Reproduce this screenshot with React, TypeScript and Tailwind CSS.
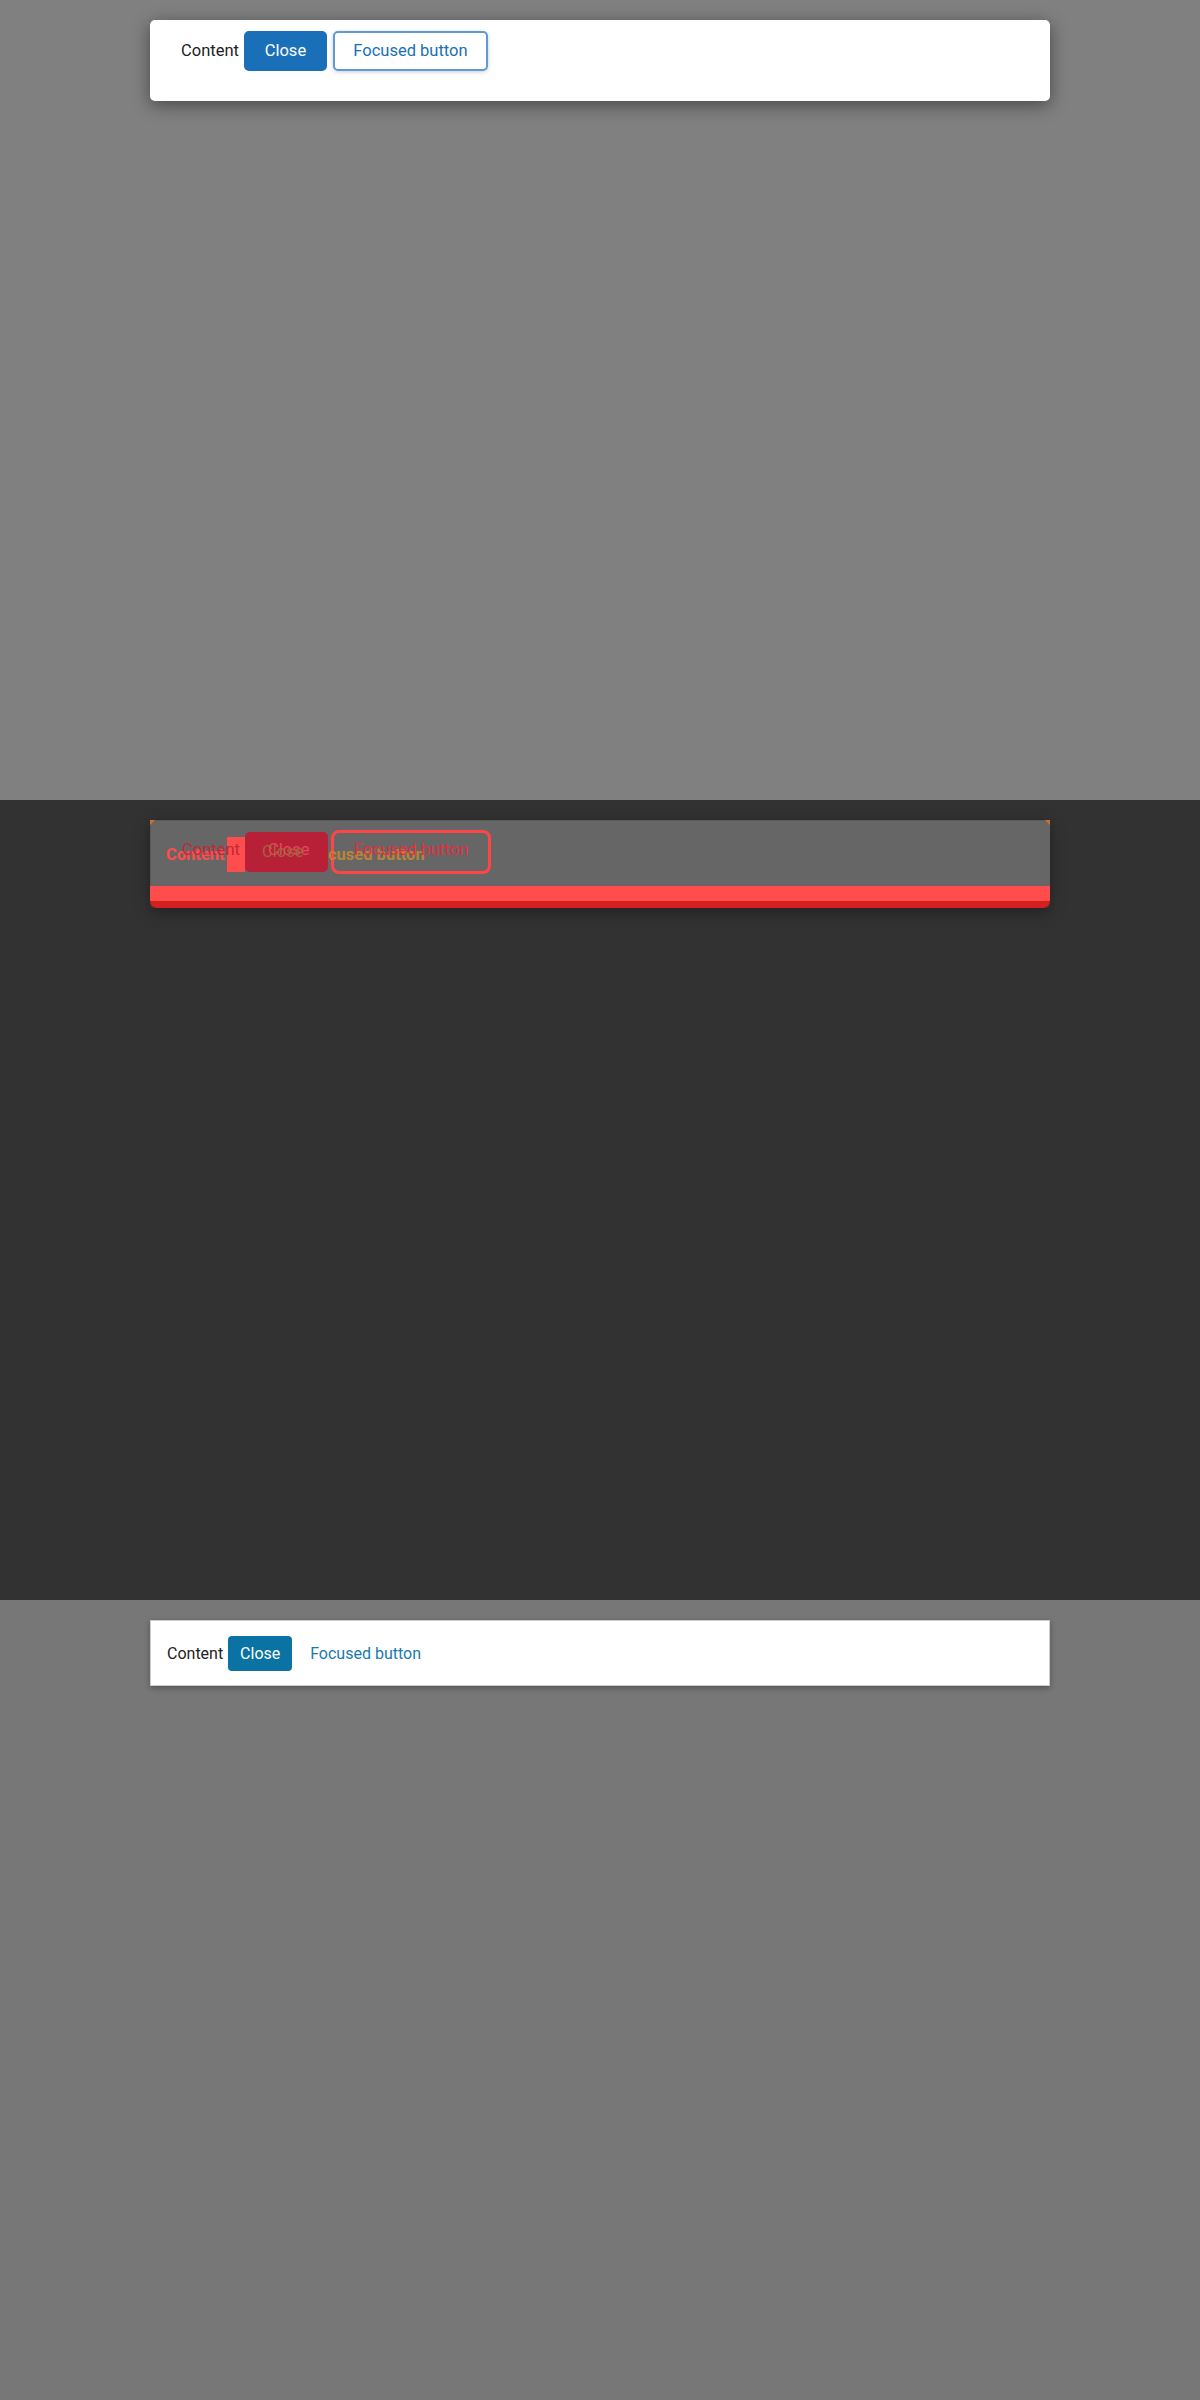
import React from 'react';

const font = { fontFamily: 'Roboto, Lato, sans-serif' };

const DefaultDialog = () => (
  <section className="h-[800px] bg-[#808080] pt-5">
    <div className="mx-auto w-[900px] h-[81px] rounded-[5px] bg-white shadow-[0_4px_18px_rgba(0,0,0,0.45)] pl-[31px] pt-[11px]">
      <div className="flex items-center gap-[5px] text-[16.5px]">
        <span className="text-[#222]">Content</span>
        <button className="h-10 w-[83px] rounded-[5px] bg-[#1a70b8] text-white">Close</button>
        <button className="ml-px h-10 w-[155px] rounded-[5px] border-2 border-[#5e9ad4] bg-white text-[#1a6fb5] shadow-[0_1px_4px_rgba(0,0,0,0.2)]">
          Focused button
        </button>
      </div>
    </div>
  </section>
);

// same dialog, but rendered as a diff overlay: layers stacked in one grid cell
const OverlayDialog = () => (
  <section className="h-[800px] bg-[#323232] pt-5">
    <div className="relative mx-auto w-[900px] shadow-[0_4px_14px_rgba(0,0,0,0.35)]">
      <div className="grid h-[66px] bg-[#666] border-t border-l border-[#5a5a5a] rounded-tl-[3px] text-[16.5px] whitespace-nowrap">
        <div className="[grid-area:1/1] flex items-center h-[62px] pl-[76px]">
          <div className="mt-[4px] w-[18px] h-[35px] bg-[#ff4d4d]" />
          <div className="w-[83px] h-10 rounded-[5px] bg-[#b82038]" />
          <div className="ml-[3px] w-[160px] h-[44px] rounded-[8px] border-[3px] border-[#ff4545]" />
        </div>
        <div className="[grid-area:1/1] flex items-start pt-[22px] pl-[15px]">
          <span className="w-[162px] font-bold text-[#ff4d4d]">Content</span>
          <span className="font-bold text-[#b8843a]">cused button</span>
        </div>
        <div className="[grid-area:1/1] flex items-start pt-[19px] pl-[111px]">
          <span className="text-[#a07040] opacity-80">Close</span>
        </div>
        <div className="[grid-area:1/1] flex items-start pt-[17px] pl-[31px]">
          <span className="w-[86px] text-[#c02838]">Content</span>
          <span className="w-[86px] text-[#e04a5a]">Close</span>
          <span className="text-[#e03040]">Focused button</span>
        </div>
      </div>
      <div className="h-[15px] bg-[#ff4d4d]" />
      <div className="h-[7px] bg-[#d42020] rounded-bl-[10px] rounded-br-[10px]" />
      <div className="absolute left-0 top-0 w-[5px] h-[5px] bg-[#d07030] [clip-path:polygon(0_0,100%_0,0_100%)]" />
      <div className="absolute right-0 top-0 w-[5px] h-[5px] bg-[#d07030] [clip-path:polygon(0_0,100%_0,100%_100%)]" />
    </div>
  </section>
);

const FlatDialog = () => (
  <section className="h-[800px] bg-[#777] pt-5">
    <div className="mx-auto w-[900px] h-[66px] bg-white border border-[#ccc] shadow-[0_2px_6px_rgba(0,0,0,0.3)] px-4 pt-[15px]">
      <div className="flex items-center gap-[5px] text-[16px]">
        <span className="text-[#222]">Content</span>
        <button className="h-[35px] w-[64px] rounded-[4px] bg-[#0a73a3] text-white">Close</button>
        <button className="ml-[13px] text-[#1a7aad]">Focused button</button>
      </div>
    </div>
  </section>
);

export default function App() {
  return (
    <div style={font} className="w-[1200px]">
      <DefaultDialog />
      <OverlayDialog />
      <FlatDialog />
    </div>
  );
}
